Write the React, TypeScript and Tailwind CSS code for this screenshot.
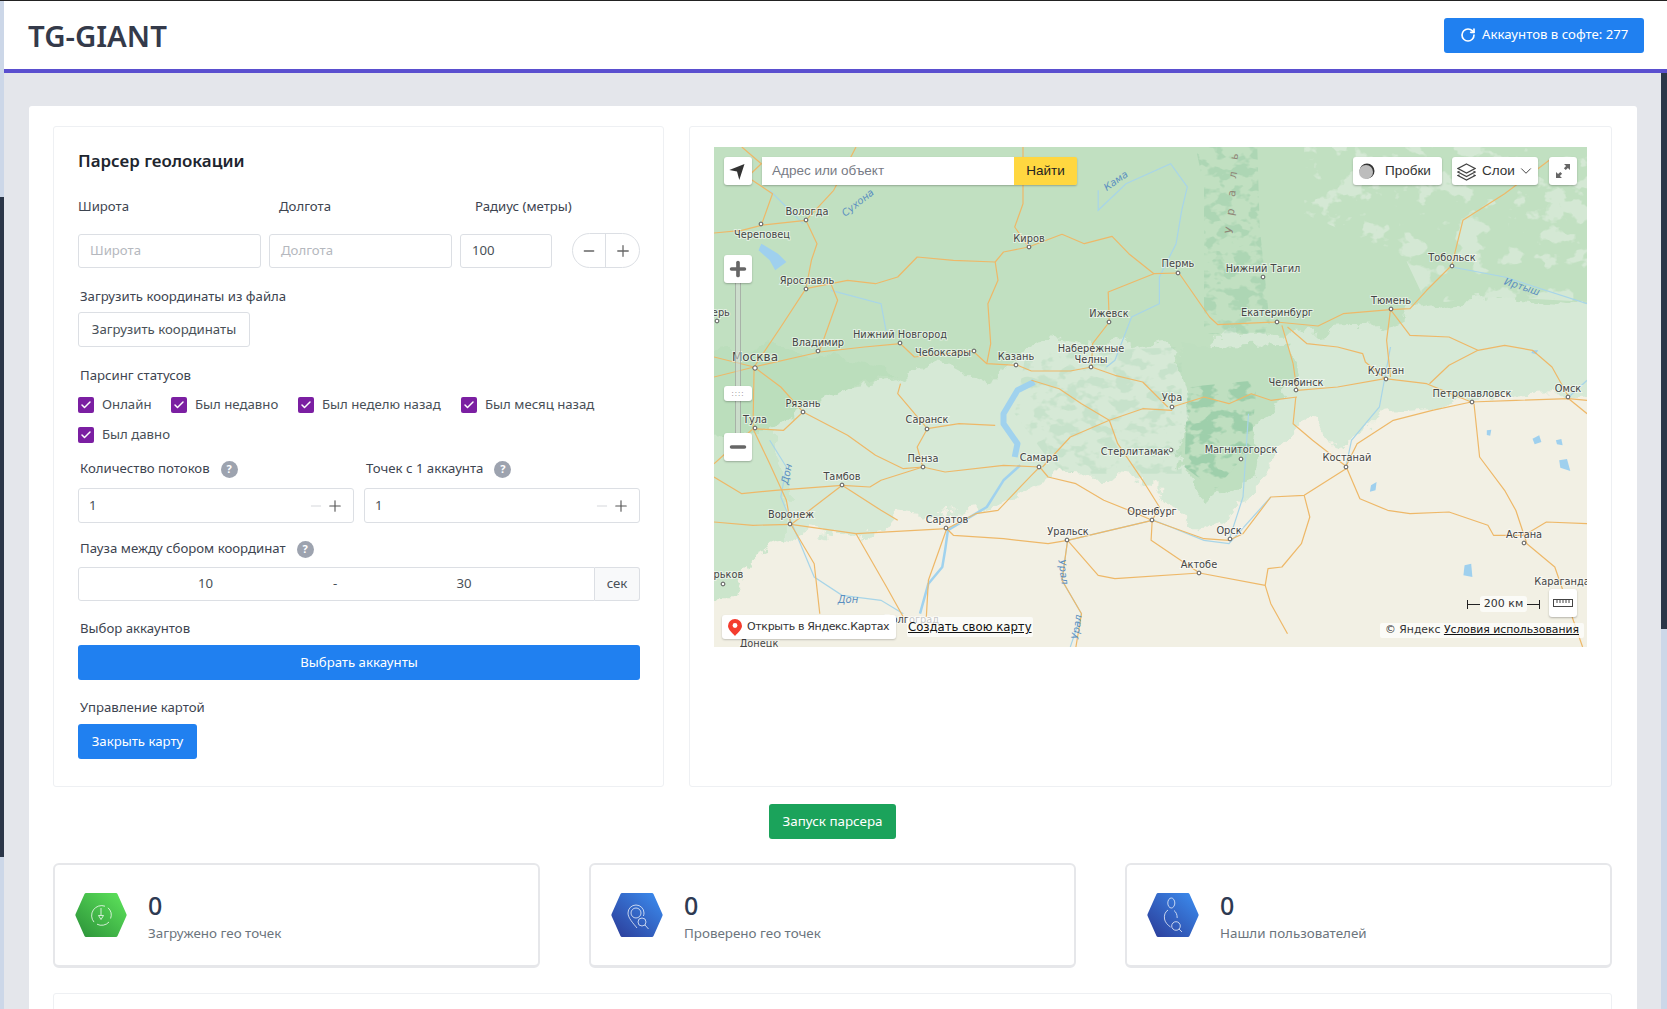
import { Check, ChevronDown, Minus, Plus, RotateCw } from "lucide-react";
import type { ReactNode } from "react";

// map drawing: coordinates were read off a full map crop (u / 1.796, v / 3)
const toPath = (c: number[]) => {
  let d = "";
  for (let i = 0; i < c.length; i += 2) {
    d += `${i === 0 ? "M" : "L"}${(714 + c[i] / 1.796).toFixed(1)} ${(147 + c[i + 1] / 3).toFixed(1)} `;
  }
  return d;
};

const steppe = [-60,1345,45,1345,70,1230,130,1190,170,1150,250,1170,300,1150,330,1090,380,1100,470,1090,540,1050,610,985,700,990,790,1010,870,1150,925,1100,960,1050,1000,950,1030,860,1075,790,1110,890,1150,880,1200,800,1280,790,1320,760,1400,750,1640,740,1640,1560,-60,1560];
const lightForest = [100,850,230,720,330,700,410,640,500,720,520,650,600,570,700,600,800,570,860,680,900,560,1000,560,1050,560,1120,545,1200,540,1260,480,1400,440,1640,480,1640,800,1320,800,1280,820,1200,830,1150,900,1110,910,1075,800,1030,880,1000,970,960,1080,925,1120,870,1170,790,1030,700,1010,610,1005,540,1070,470,1110,380,1120,330,1110,300,1170,250,1190,170,1170,130,1210,130,1000];
const westLight = [-60,860,100,850,130,1000,130,1210,70,1240,45,1360,-60,1360];
const westForest = [-60,620,120,600,330,680,230,720,130,830,100,860,-60,860];
const uralBase = [830,600,1040,590,1050,720,985,800,960,1000,880,1060,830,960,860,760];
const uralCore = [850,720,975,700,965,900,900,1030,845,960];
const uralNorth = [860,-40,975,-40,980,240,1000,560,880,560,880,120];
const northEast = [1060,-40,1640,-40,1640,470,1400,450,1280,470,1240,330,1060,200];
const southPatches = [1000,960,1180,860,1200,1000,1050,1060];
const deltaPatch = [560,620,840,600,840,980,620,980,540,800];

const roads = [
  [0,258,50,250,85,235,165,220,185,290,175,340,165,425],
  [165,220,215,130,255,0],
  [50,0,85,50,60,90,105,140,85,235],
  [165,425,210,410,240,400,290,410,330,390,365,330,430,340,505,345,520,315,565,300],
  [565,300,540,240,555,170,555,0],
  [565,300,625,262,665,290,715,268,745,320,790,380,835,378],
  [165,425,120,540,72,660],
  [210,410,222,460,190,610],
  [72,660,190,615,270,600,335,590,360,630,465,612,490,650,545,655],
  [505,345,510,400,492,470,497,590,490,650],
  [545,655,570,672,640,672,678,660,720,685,770,705,815,780],
  [790,380,708,435,710,525,680,590,678,660],
  [835,378,890,510,905,533,1010,525],
  [1010,525,1085,537,1130,500,1215,488],
  [1215,488,1250,485,1280,430,1325,355,1345,220,1420,140,1500,40],
  [1020,535,1040,650,1047,730],
  [1030,540,1065,590,1120,600,1165,620,1170,645,1205,695],
  [1215,488,1208,580,1215,690],
  [1215,488,1250,565,1320,570,1372,610,1420,595,1470,610,1505,660,1535,750],
  [1205,695,1280,710,1360,765],
  [1285,710,1320,655,1372,610],
  [1047,730,1120,720,1205,695],
  [823,780,880,750,925,770,965,740,1000,760,1047,750],
  [823,790,770,785,710,820,660,770,620,725,570,700],
  [710,820,640,870,590,960],
  [710,820,725,890,770,1000,800,1080,787,1120],
  [1045,750,1040,830,1075,880,1135,958],
  [1135,958,1155,890,1220,820,1290,790,1360,765],
  [1360,765,1440,760,1535,755,1568,760],
  [1535,755,1568,800],
  [1365,770,1375,930,1420,1030,1440,1090,1460,1190,1510,1260,1560,1500],
  [1455,1165,1400,1165,1390,1135,1320,1095,1250,1100,1210,1090,1160,1055,1135,958],
  [1455,1165,1495,1125,1568,1130],
  [1135,965,1060,1045,1000,1050,950,1160,925,1180],
  [1060,1045,1070,1110,1055,1190,1020,1260,995,1265,990,1315],
  [872,1278,720,1295,690,1285,635,1180,600,1190,520,1175,430,1165,418,1145],
  [872,1278,990,1315,1000,1370,1030,1460],
  [872,1278,785,1180,787,1120,635,1180],
  [787,1120,880,1175,925,1180],
  [585,960,600,990,650,1010,700,1060,745,1090,787,1120],
  [585,960,570,985,510,1090,470,1100,418,1145],
  [585,960,520,955,415,975,375,960,300,1000,280,1020,230,1015],
  [375,960,340,965,290,925,240,865,160,795,125,850,70,845],
  [383,845,365,900,375,960],
  [383,845,330,740,335,710],
  [383,845,440,830,505,835],
  [230,1015,140,1130],
  [138,1132,70,1135,0,1125],
  [138,1132,255,1160,418,1145],
  [138,1132,180,1250,190,1400],
  [418,1145,385,1300,380,1450],
  [255,1160,310,1320,340,1410],
  [72,660,120,720,160,795],
  [72,660,70,845],
  [0,630,72,660],
  [0,690,72,660],
  [70,845,20,920,0,950],
  [70,845,100,950,130,1060,138,1132],
  [230,1015,300,1090,330,1120],
  [0,990,50,1040,110,1030,230,1015],
  [635,1180,625,1300,660,1400,650,1500],
];

const rivers = [
  [100,130,130,180,160,230],
  [840,190,830,290,800,390,800,470,750,510,720,640,705,660],
  [690,130,690,190,740,110,820,50,850,120,840,190],
  [100,880,130,960,120,1050,140,1130,180,1290,230,1345,300,1360,340,1400],
  [925,1180,950,1050,960,800],
  [787,1120,635,1180,625,1300,660,1400,640,1500],
  [1325,360,1420,390,1568,470],
  [1215,600,1195,780,1145,880,1135,958],
  [1535,750,1568,700],
  [790,1120,880,1180,925,1190,1000,1050],
  [210,430,300,470,310,560],
];

const wideWater = [
  [575,705,545,730,520,800,520,830,545,890,540,930],
  [550,955,520,1000,490,1080,420,1150,415,1210,410,1260,385,1310,370,1400],
];

const lakes = [
  [85,290,115,320,130,345,110,370,100,340,80,310],
  [1470,875,1482,865,1486,885,1474,892],
  [1512,880,1522,876,1524,895,1514,892],
  [1518,940,1532,936,1538,972,1520,962],
  [1388,850,1396,848,1394,866,1388,864],
  [1180,1015,1190,1005,1188,1030,1178,1034],
  [1348,1255,1360,1250,1362,1290,1346,1285],
  [1470,610,1480,610,1476,622,1468,618],
];

type City = [string, number, number, number?, number?];

const cities: City[] = [
  ["Вологда", 807, 215, 806, 220],
  ["Череповец", 762, 238, 761, 224],
  ["Киров", 1029, 242, 1029, 247],
  ["Пермь", 1178, 267, 1178, 273],
  ["Ярославль", 807, 284, 806, 289],
  ["Тверь", 715, 316, 717, 321],
  ["Ижевск", 1109, 317, 1109, 322],
  ["Нижний Новгород", 900, 338, 900, 343],
  ["Владимир", 818, 346, 818, 351],
  ["Чебоксары", 943, 356, 974, 351],
  ["Казань", 1016, 360, 1016, 365],
  ["Набережные", 1091, 352],
  ["Челны", 1091, 363, 1091, 367],
  ["Уфа", 1172, 401, 1172, 407],
  ["Рязань", 803, 407, 803, 412],
  ["Тула", 755, 423, 755, 428],
  ["Саранск", 927, 423, 927, 429],
  ["Пенза", 923, 462, 923, 467],
  ["Самара", 1039, 461, 1039, 467],
  ["Стерлитамак", 1135, 455, 1171, 450],
  ["Тамбов", 842, 480, 842, 485],
  ["Воронеж", 791, 518, 790, 524],
  ["Саратов", 947, 523, 946, 528],
  ["Оренбург", 1152, 515, 1152, 520],
  ["Уральск", 1068, 535, 1067, 540],
  ["Актобе", 1199, 568, 1199, 573],
  ["Харьков", 722, 578, 723, 584],
  ["Волгоград", 912, 623],
  ["Донецк", 759, 647],
  ["Тобольск", 1452, 261, 1452, 266],
  ["Нижний Тагил", 1263, 272, 1263, 277],
  ["Екатеринбург", 1277, 316, 1277, 322],
  ["Тюмень", 1391, 304, 1391, 309],
  ["Челябинск", 1296, 386, 1296, 390],
  ["Курган", 1386, 374, 1386, 379],
  ["Петропавловск", 1472, 397, 1472, 402],
  ["Омск", 1568, 392, 1568, 397],
  ["Магнитогорск", 1241, 453, 1241, 459],
  ["Костанай", 1347, 461, 1346, 467],
  ["Орск", 1229, 534, 1230, 539],
  ["Астана", 1524, 538, 1524, 543],
  ["Караганда", 1562, 585],
];

const riverNames: [string, number, number, number][] = [
  ["Сухона", 858, 203, -38],
  ["Кама", 1116, 181, -35],
  ["Иртыш", 1522, 287, 18],
  ["Дон", 787, 474, -78],
  ["Дон", 848, 600, 0],
  ["Урал", 1063, 572, 82],
  ["Урал", 1077, 627, -82],
];

function MapDrawing() {
  return (
    <svg viewBox="714 147 873 500" className="block h-[500px] w-[873px]">
      <defs>
        <filter id="rough" x="-5%" y="-5%" width="110%" height="110%" colorInterpolationFilters="sRGB">
          <feTurbulence type="fractalNoise" baseFrequency="0.045" numOctaves="4" seed="3" result="n" />
          <feDisplacementMap in="SourceGraphic" in2="n" scale="26" xChannelSelector="R" yChannelSelector="G" />
        </filter>
        <filter id="mottle-light" x="0" y="0" width="100%" height="100%" colorInterpolationFilters="sRGB">
          <feTurbulence type="fractalNoise" baseFrequency="0.035 0.045" numOctaves="4" seed="8" result="n" />
          <feColorMatrix in="n" type="matrix" values="0 0 0 0 0.83  0 0 0 0 0.91  0 0 0 0 0.83  0 0 0 14 -7.6" result="a" />
          <feComposite in="a" in2="SourceGraphic" operator="in" />
        </filter>
        <filter id="mottle-dark" x="0" y="0" width="100%" height="100%" colorInterpolationFilters="sRGB">
          <feTurbulence type="fractalNoise" baseFrequency="0.06 0.09" numOctaves="3" seed="5" result="n" />
          <feColorMatrix in="n" type="matrix" values="0 0 0 0 0.62  0 0 0 0 0.81  0 0 0 0 0.67  0 0 0 9 -4.4" result="a" />
          <feComposite in="a" in2="SourceGraphic" operator="in" />
        </filter>
      </defs>
      <rect x="714" y="147" width="873" height="500" fill="#c1e0c1" />
      <g filter="url(#rough)">
        <path d={toPath(westForest) + "Z"} fill="#bbdebc" />
        <path d={toPath(lightForest) + "Z"} fill="#d6e9d6" />
        <path d={toPath(westLight) + "Z"} fill="#cbe5cb" />
        <path d={toPath(uralBase) + "Z"} fill="#bfdfc0" />
      </g>
      <path d={toPath(northEast) + "Z"} fill="#fff" filter="url(#mottle-light)" />
      <path d={toPath(deltaPatch) + "Z"} fill="#fff" filter="url(#mottle-dark)" opacity="0.25" />
      <path d={toPath(uralNorth) + "Z"} fill="#fff" filter="url(#mottle-dark)" opacity="0.55" />
      <path d={toPath(uralCore) + "Z"} fill="#fff" filter="url(#mottle-dark)" />
      <path d={toPath(southPatches) + "Z"} fill="#fff" filter="url(#mottle-light)" />
      <g filter="url(#rough)">
        <path d={toPath(steppe) + "Z"} fill="#f2f0e4" />
      </g>
      {rivers.map((r, i) => (
        <path key={i} d={toPath(r)} fill="none" stroke="#a8d5e8" strokeWidth="1.2" />
      ))}
      {wideWater.map((r, i) => (
        <path key={i} d={toPath(r)} fill="none" stroke="#a0d2ee" strokeWidth={i === 0 ? 6 : 2.5} strokeLinejoin="round" />
      ))}
      {lakes.map((p, i) => (
        <path key={i} d={toPath(p) + "Z"} fill="#9fd0ee" />
      ))}
      {roads.map((r, i) => (
        <path key={i} d={toPath(r)} fill="none" stroke="#eeb868" strokeWidth="1.2" strokeLinejoin="round" />
      ))}
      {riverNames.map(([name, x, y, rot]) => (
        <text
          key={name + x}
          x={x}
          y={y}
          transform={`rotate(${rot} ${x} ${y})`}
          textAnchor="middle"
          dominantBaseline="middle"
          fontFamily="'DejaVu Sans', sans-serif"
          fontStyle="italic"
          fontSize="10"
          fill="#5b8fc0"
        >
          {name}
        </text>
      ))}
      {["У", "р", "а", "л", "ь"].map((ch, i) => (
        <text
          key={ch}
          x={1233 + i * 1.2}
          y={231 - i * 18.5}
          transform={`rotate(-80 ${1233 + i * 1.2} ${231 - i * 18.5})`}
          textAnchor="middle"
          fontFamily="'DejaVu Sans', sans-serif"
          fontSize="11"
          fill="#8f8576"
        >
          {ch}
        </text>
      ))}
      {cities.map(([name, x, y, dx, dy]) => (
        <g key={name}>
          {dx !== undefined && dy !== undefined && (
            <circle cx={dx} cy={dy} r="1.9" fill="#fff" stroke="#555" strokeWidth="1" />
          )}
          <text
            x={x}
            y={y}
            textAnchor="middle"
            fontFamily="'DejaVu Sans', sans-serif"
            fontSize="9.800"
            fill="#454545"
            stroke="#ffffff"
            strokeOpacity="0.55"
            strokeWidth="2"
            paintOrder="stroke"
          >
            {name}
          </text>
        </g>
      ))}
      <text
        x="755"
        y="361"
        textAnchor="middle"
        fontFamily="'DejaVu Sans', sans-serif"
        fontSize="12"
        fill="#454545"
        stroke="#ffffff"
        strokeOpacity="0.55"
        strokeWidth="2"
        paintOrder="stroke"
      >
        Москва
      </text>
      <circle cx="755" cy="368" r="2.2" fill="#fff" stroke="#555" strokeWidth="1" />
    </svg>
  );
}

function MapButton({ className, children }: { className: string; children: ReactNode }) {
  return (
    <div className={`absolute flex items-center justify-center rounded-[3px] bg-white shadow-[0_1px_2px_rgba(0,0,0,0.25)] ${className}`}>
      {children}
    </div>
  );
}

function YandexMap() {
  return (
    <div className="relative h-[500px] w-[873px] overflow-hidden font-['Liberation_Sans',sans-serif] text-[13.500px] text-black">
      <MapDrawing />

      <MapButton className="left-[10px] top-[10px] h-[28px] w-[28px]">
        <svg width="28" height="28" viewBox="0 0 28 28">
          <path d="M20.5 7 5.3 13l7.700 1.500 2.300 8.500z" fill="#333" />
        </svg>
      </MapButton>

      <div className="absolute left-[48px] top-[10px] flex h-[28px] w-[315px] rounded-[2px] shadow-[0_1px_2px_rgba(0,0,0,0.25)]">
        <div className="flex w-[252px] items-center bg-white pl-[10px] text-[#777b85]">Адрес или объект</div>
        <div className="flex w-[63px] items-center justify-center rounded-r-[2px] bg-[#ffd740] text-[#222]">Найти</div>
      </div>

      <MapButton className="left-[639px] top-[10px] h-[28px] w-[89px] justify-start pl-[6px]">
        <svg width="16" height="16" viewBox="0 0 16 16">
          <circle cx="8" cy="8" r="7.500" fill="#333" />
          <circle cx="7" cy="9" r="7" fill="#bdbdbd" />
        </svg>
        <span className="ml-[10px] text-[#333]">Пробки</span>
      </MapButton>

      <MapButton className="left-[738px] top-[10px] h-[28px] w-[86px] justify-start pl-[5px]">
        <svg width="19" height="19" viewBox="0 0 19 19" fill="none" stroke="#444" strokeWidth="1.2">
          <path d="M9.500 2 18 6.500 9.500 11 1 6.500z" fill="#fff" />
          <path d="M2.500 9.400 1 10l8.500 4.500L18 10l-1.500-.6" />
          <path d="M2.500 12.900 1 13.500 9.500 18l8.500-4.500-1.500-.6" />
        </svg>
        <span className="ml-[6px] text-[#333]">Слои</span>
        <ChevronDown size={18} strokeWidth={1.2} className="ml-[2px] text-[#333]" />
      </MapButton>

      <MapButton className="left-[835px] top-[10px] h-[28px] w-[28px]">
        <svg width="16" height="16" viewBox="0 0 16 16" fill="#666">
          <path d="M9 1h6v6l-2.100-2.100-2.200 2.200-1.800-1.800 2.200-2.200z" />
          <path d="M7 15H1V9l2.100 2.100 2.200-2.200 1.800 1.800-2.200 2.200z" />
        </svg>
      </MapButton>

      <div className="absolute left-[21px] top-[136px] h-[160px] w-[6px] border-x border-[#8f968f]/60 bg-[#d4dad4]/60" />
      <MapButton className="left-[10px] top-[108px] h-[28px] w-[28px]">
        <Plus size={22} strokeWidth={4} className="text-[#666]" />
      </MapButton>
      <MapButton className="left-[10px] top-[239px] h-[15px] w-[28px]">
        <span className="text-[8px] leading-none tracking-[1px] text-[#777]">::::</span>
      </MapButton>
      <MapButton className="left-[10px] top-[286px] h-[28px] w-[28px]">
        <Minus size={22} strokeWidth={4} className="text-[#666]" />
      </MapButton>

      <div className="absolute left-[8px] top-[468px] flex h-[24px] w-[174px] items-center rounded-[3px] bg-white pl-[6px] shadow-[0_1px_2px_rgba(0,0,0,0.2)] font-['DejaVu_Sans',sans-serif] text-[11px] text-[#333]">
        <svg width="14" height="17" viewBox="0 0 14 17" className="mr-[5px] shrink-0">
          <path d="M7 0a7 7 0 0 0-7 7c0 3.500 4.500 7 7 10 2.500-3 7-6.500 7-10a7 7 0 0 0-7-7z" fill="#f43c2e" />
          <circle cx="7" cy="6.500" r="2.400" fill="#fff" />
        </svg>
        <span className="whitespace-nowrap tracking-[-0.35px]">Открыть в Яндекс.Картах</span>
      </div>
      <div className="absolute left-[193px] top-[470px] h-[20px] whitespace-nowrap rounded-[2px] bg-white/70 px-[1px] font-['DejaVu_Sans',sans-serif] text-[11.700px] leading-[20px] text-[#111] underline">
        Создать свою карту
      </div>

      <div className="absolute left-[753px] top-[449px] flex h-[16px] items-center font-['DejaVu_Sans',sans-serif] text-[11px] text-[#333]">
        <span className="h-[9px] w-[13px] border-l border-[#222] bg-[linear-gradient(#222,#222)] bg-[length:100%_1px] bg-center bg-no-repeat" />
        <span className="flex h-[16px] w-[47px] items-center justify-center rounded-[3px] bg-white/70">200 км</span>
        <span className="h-[9px] w-[13px] border-r border-[#222] bg-[linear-gradient(#222,#222)] bg-[length:100%_1px] bg-center bg-no-repeat" />
      </div>
      <MapButton className="left-[835px] top-[442px] h-[28px] w-[28px]">
        <svg width="20" height="8" viewBox="0 0 20 8" fill="none" stroke="#444">
          <rect x=".5" y=".5" width="19" height="7" />
          <path d="M4 1v3M7 1v3M10 1v3M13 1v3M16 1v3" />
        </svg>
      </MapButton>

      <div className="absolute right-[3px] top-[476px] flex h-[15px] items-center whitespace-nowrap rounded-[2px] bg-white/70 px-[5px] font-['DejaVu_Sans',sans-serif] text-[10.800px] text-[#333]">
        <span>© Яндекс&nbsp;</span>
        <span className="text-[#111] underline">Условия использования</span>
      </div>
    </div>
  );
}

function Label({ children, className = "" }: { children: ReactNode; className?: string }) {
  return <div className={`flex h-5 items-center pb-[2px] pl-[2px] text-[13.200px] text-[#3d4450] ${className}`}>{children}</div>;
}

function Help() {
  return (
    <span className="ml-[11px] flex h-[17px] w-[17px] items-center justify-center rounded-full bg-[#9da3af] text-[11px] font-bold text-white">
      ?
    </span>
  );
}

function Status({ label, className }: { label: string; className: string }) {
  return (
    <label className={`flex h-4 items-center gap-2 text-[13.200px] text-[#495057] ${className}`}>
      <span className="flex h-4 w-4 items-center justify-center rounded-[2px] bg-[#7b1fa2]">
        <Check size={12} strokeWidth={3} className="text-white" />
      </span>
      {label}
    </label>
  );
}

function NumberField() {
  return (
    <div className="flex h-[35px] items-center rounded-[3px] border border-[#dcdfe4] pl-[10px] pr-[9px] text-[13.200px] text-[#495057]">
      <span className="flex-1">1</span>
      <Minus size={16} strokeWidth={1.5} className="mr-[2px] text-[#d5d7db]" />
      <Plus size={18} strokeWidth={1.5} className="text-[#555]" />
    </div>
  );
}

function ParserForm() {
  return (
    <div className="h-[661px] w-[611px] rounded-[3px] border border-[#eef0f3] pl-6 pr-[23px] pt-[22px]">
      <h2 className="h-6 text-[16.900px] font-semibold leading-6 text-[#20252e]">Парсер геолокации</h2>

      <div className="mt-[24px] flex h-5 items-center text-[13.200px] text-[#3d4450]">
        <span className="w-[201px]">Широта</span>
        <span className="w-[196px]">Долгота</span>
        <span>Радиус (метры)</span>
      </div>

      <div className="mt-[17px] flex gap-2 text-[13.200px]">
        <div className="flex h-[34px] w-[183px] items-center rounded-[3px] border border-[#dcdfe4] pl-[11px] text-[#b5b8be]">Широта</div>
        <div className="flex h-[34px] w-[183px] items-center rounded-[3px] border border-[#dcdfe4] pl-[11px] text-[#b5b8be]">Долгота</div>
        <div className="flex h-[34px] w-[92px] items-center rounded-[3px] border border-[#dcdfe4] pl-[11px] text-[#495057]">100</div>
        <div className="ml-3 flex h-[35px] w-[68px] -translate-y-px items-center rounded-full border border-[#dcdfe4] text-[#666]">
          <span className="flex h-full w-[33px] items-center justify-center border-r border-[#dcdfe4]">
            <Minus size={16} strokeWidth={2} />
          </span>
          <span className="flex h-full flex-1 items-center justify-center">
            <Plus size={18} strokeWidth={1.7} />
          </span>
        </div>
      </div>

      <Label className="mt-[19px]">Загрузить координаты из файла</Label>
      <button className="mt-[4px] block h-[35px] w-[172px] rounded-[3px] border border-[#dcdfe4] text-[13.200px] text-[#495057]">
        Загрузить координаты
      </button>

      <Label className="mt-[20px]">Парсинг статусов</Label>
      <div className="mt-[10px] flex flex-wrap gap-y-[14px]">
        <Status label="Онлайн" className="w-[93px]" />
        <Status label="Был недавно" className="w-[127px]" />
        <Status label="Был неделю назад" className="w-[163px]" />
        <Status label="Был месяц назад" className="w-[179px]" />
        <Status label="Был давно" className="w-[100px]" />
      </div>

      <div className="mt-[17px] grid grid-cols-2 gap-x-[10px]">
        <Label>
          Количество потоков
          <Help />
        </Label>
        <Label>
          Точек с 1 аккаунта
          <Help />
        </Label>
        <div className="mt-[8px]">
          <NumberField />
        </div>
        <div className="mt-[8px]">
          <NumberField />
        </div>
      </div>

      <Label className="mt-[17px]">
        Пауза между сбором координат
        <Help />
      </Label>
      <div className="mt-[7px] flex h-[34px] text-[13.200px] text-[#495057]">
        <div className="flex w-[517px] items-center rounded-l-[3px] border border-[#dcdfe4] text-center">
          <span className="w-[253px]">10</span>
          <span className="w-[6px]">-</span>
          <span className="w-[252px]">30</span>
        </div>
        <div className="flex w-[45px] items-center justify-center rounded-r-[3px] border border-l-0 border-[#dcdfe4] bg-[#f8f9fa]">сек</div>
      </div>

      <Label className="mt-[19px]">Выбор аккаунтов</Label>
      <button className="mt-[5px] block h-[35px] w-full rounded-[3px] bg-[#2080f0] text-[13.200px] text-white">Выбрать аккаунты</button>

      <Label className="mt-[19px]">Управление картой</Label>
      <button className="mt-[5px] block h-[35px] w-[119px] rounded-[3px] bg-[#2080f0] text-[13.200px] text-white">Закрыть карту</button>
    </div>
  );
}

function HexGreen() {
  return (
    <svg width="52" height="44" viewBox="0 0 52 44" className="shrink-0">
      <defs>
        <linearGradient id="hex-green" x1="0" y1="1" x2="1" y2="0">
          <stop offset="0" stopColor="#2a9038" />
          <stop offset="1" stopColor="#5fe65c" />
        </linearGradient>
      </defs>
      <path d="M.6 21 9.500 1Q10 0 11 0h30q1 0 1.500 1l8.900 20q.5 1 0 2l-8.900 20q-.5 1-1.500 1H11q-1 0-1.500-1L.6 23q-.5-1 0-2z" fill="url(#hex-green)" />
      <g fill="none" stroke="#fff" strokeOpacity="0.85" strokeWidth="0.9">
        <path d="M30 13.200A10 10 0 0 0 19 29.100M22 31.200A10 10 0 0 0 34 29M35.600 25.500A10 10 0 0 0 33 14.800" />
        <path d="M26 15v7M23.500 22.500h5M23.500 22.500 26 26.500l2.500-4" />
      </g>
    </svg>
  );
}

function HexBlue({ id, children }: { id: string; children: ReactNode }) {
  return (
    <svg width="52" height="44" viewBox="0 0 52 44" className="shrink-0">
      <defs>
        <linearGradient id={id} x1="0" y1="1" x2="1" y2="0">
          <stop offset="0" stopColor="#2b3a96" />
          <stop offset="1" stopColor="#3c8ff2" />
        </linearGradient>
      </defs>
      <path d="M.6 21 9.500 1Q10 0 11 0h30q1 0 1.500 1l8.900 20q.5 1 0 2l-8.900 20q-.5 1-1.500 1H11q-1 0-1.500-1L.6 23q-.5-1 0-2z" fill={`url(#${id})`} />
      <g fill="none" stroke="#fff" strokeOpacity="0.8" strokeWidth="0.9">{children}</g>
    </svg>
  );
}

function Stat({ icon, label }: { icon: ReactNode; label: string }) {
  return (
    <div className="flex h-[105px] items-center gap-[21px] rounded-[6px] border-x-2 border-b-[3px] border-t-2 border-[#e6e7ea] pl-[20px]">
      {icon}
      <div>
        <div className="mt-[3px] h-[30px] text-[25px] font-medium leading-[30px] text-[#2e3a52]">0</div>
        <div className="mt-[3px] flex h-5 items-center text-[13.400px] text-[#6c757d]">{label}</div>
      </div>
    </div>
  );
}

export default function App() {
  return (
    <div className="flex h-[1009px] w-full overflow-hidden border-t border-[#222] bg-[#e4e6eb] font-['Noto_Sans',sans-serif]">
      <div className="flex w-1 shrink-0 flex-col">
        <div className="h-[196px] bg-[#ccd7e8]" />
        <div className="h-[660px] bg-[#2b3648]" />
        <div className="flex-1 bg-[#ccd7e8]" />
      </div>

      <div className="flex min-w-0 flex-1 flex-col">
        <header className="flex h-[72px] shrink-0 items-center justify-between border-b-4 border-[#5a4fcf] bg-white pl-6 pr-[23px]">
          <h1 className="pt-[2px] text-[29.400px] font-semibold text-[#343a4a]">TG-GIANT</h1>
          <button className="flex h-[35px] w-[200px] items-center rounded-[3px] bg-[#2080f0] pl-[16px] text-[13.200px] text-white">
            <RotateCw size={16} strokeWidth={2.5} className="mr-[6px]" />
            Аккаунтов в софте: 277
          </button>
        </header>

        <div className="flex min-h-0 flex-1">
          <main className="min-w-0 flex-1 pl-[25px] pr-6 pt-[33px]">
            <div className="h-[1000px] rounded-[3px] bg-white pl-6 pr-[25px] pt-5">
              <div className="flex gap-[25px]">
                <ParserForm />
                <div className="h-[661px] w-[923px] rounded-[3px] border border-[#eef0f3] pl-6 pt-5">
                  <YandexMap />
                </div>
              </div>

              <div className="mt-[17px] flex justify-center">
                <button className="h-[35px] w-[127px] rounded-[3px] bg-[#1ba35b] text-[13.400px] text-white">Запуск парсера</button>
              </div>

              <div className="mt-6 grid grid-cols-3 gap-x-[49px]">
                <Stat icon={<HexGreen />} label="Загружено гео точек" />
                <Stat
                  label="Проверено гео точек"
                  icon={
                    <HexBlue id="hex-blue-a">
                      <path d="M25 12a8 8 0 0 0-8 8c0 5 5 10 9 15" />
                      <path d="M25 12a8 8 0 0 1 8 8c0 1-.2 2-.6 3" />
                      <circle cx="25" cy="20" r="5" />
                      <circle cx="31" cy="29" r="4" />
                      <path d="m34 32 3.500 4" />
                    </HexBlue>
                  }
                />
                <Stat
                  label="Нашли пользователей"
                  icon={
                    <HexBlue id="hex-blue-b">
                      <ellipse cx="24.300" cy="10" rx="3.500" ry="5" />
                      <path d="M21 17c-3 2-4 5-3.500 9 .5 3 3 6 6 8M27 17.500c2 1.500 3.200 4 3.200 7.500" />
                      <circle cx="29" cy="33" r="4.300" />
                      <path d="m32 36 3 3" />
                    </HexBlue>
                  }
                />
              </div>

              <div className="mt-[25px] h-[100px] rounded-[3px] border border-[#eef0f3]" />
            </div>
          </main>

          <div className="flex w-[6px] shrink-0 flex-col">
            <div className="h-[556px] bg-[#2b3648]" />
            <div className="flex-1 bg-[#ccd7e8]" />
          </div>
        </div>
      </div>
    </div>
  );
}
